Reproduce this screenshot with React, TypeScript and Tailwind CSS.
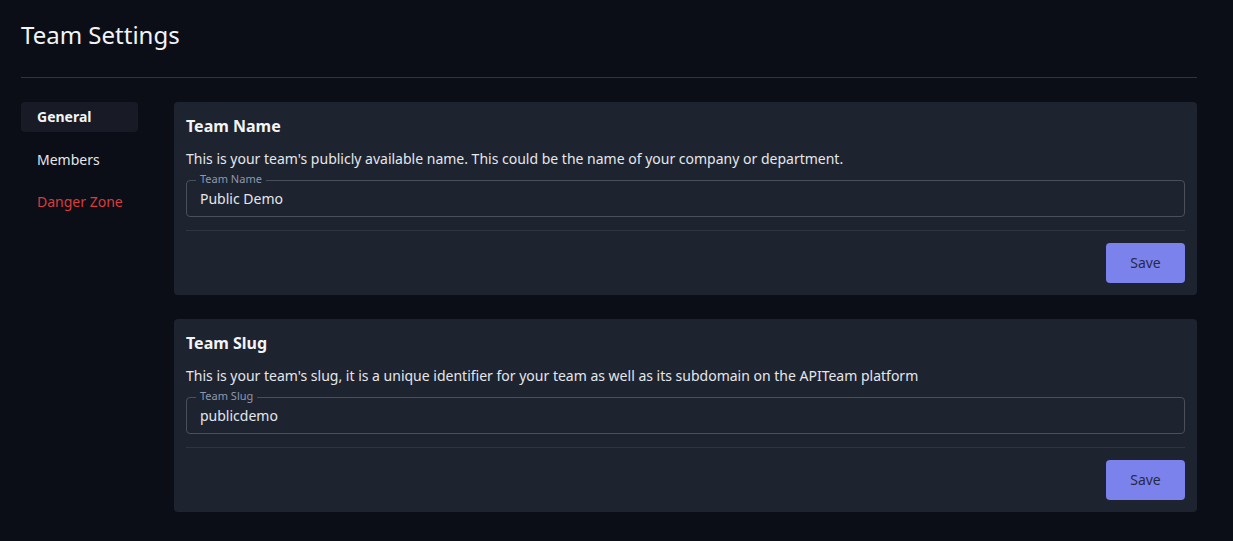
import { useState } from 'react';

const sections = [
  {
    title: 'Team Name',
    desc: "This is your team's publicly available name. This could be the name of your company or department.",
    label: 'Team Name',
    value: 'Public Demo',
  },
  {
    title: 'Team Slug',
    desc: "This is your team's slug, it is a unique identifier for your team as well as its subdomain on the APITeam platform",
    label: 'Team Slug',
    value: 'publicdemo',
  },
];

const tabs = ['General', 'Members', 'Danger Zone'];

function SettingCard({ title, desc, label, value }: (typeof sections)[number]) {
  const [text, setText] = useState(value);

  return (
    <div className="bg-[#1e2330] rounded px-3 pt-3 pb-3">
      <h2 className="text-base leading-6 font-bold text-[#f3f4f6]">{title}</h2>
      <p className="mt-[11px] text-sm leading-5 text-[#e5e7eb]">{desc}</p>
      <div className="relative mt-[11px] h-[37px] rounded border border-[#4a4f5c]">
        <span className="absolute -top-[9px] left-[9px] bg-[#1e2330] px-1 text-[11px] leading-[14px] text-[#8d98ad]">
          {label}
        </span>
        <input
          value={text}
          onChange={(e) => setText(e.target.value)}
          className="h-full w-full bg-transparent pl-[13px] text-sm text-[#e5e7eb] outline-none"
        />
      </div>
      <div className="mt-[13px] h-px bg-[#2f3442]" />
      <div className="mt-3 flex justify-end">
        <button className="h-10 w-[79px] rounded bg-[#7b82ec] text-sm text-[#262a47]">Save</button>
      </div>
    </div>
  );
}

export default function App() {
  const [active, setActive] = useState(0);

  return (
    <div
      className="min-h-[541px] bg-[#0b0e17] px-[21px] pt-[19px] pb-8 pr-[36px]"
      style={{ fontFamily: '"Noto Sans", sans-serif' }}
    >
      <h1 className="text-2xl leading-8 text-[#f3f4f6]">Team Settings</h1>
      <div className="mt-[26px] h-px bg-[#30343f]" />

      <div className="mt-6 flex gap-9">
        <nav className="flex w-[117px] shrink-0 flex-col gap-[12.5px]">
          {tabs.map((t, i) => (
            <button
              key={t}
              onClick={() => setActive(i)}
              className={`h-[30px] rounded-sm pl-4 text-left text-sm ${
                active === i ? 'bg-[#181b25] font-bold text-[#f3f4f6]' : ''
              } ${t === 'Danger Zone' ? 'text-[#dc3b3b]' : active === i ? '' : 'text-[#e5e7eb]'}`}
            >
              {t}
            </button>
          ))}
        </nav>

        <div className="flex flex-1 flex-col gap-[23.5px]">
          {sections.map((s) => (
            <SettingCard key={s.title} {...s} />
          ))}
        </div>
      </div>
    </div>
  );
}
